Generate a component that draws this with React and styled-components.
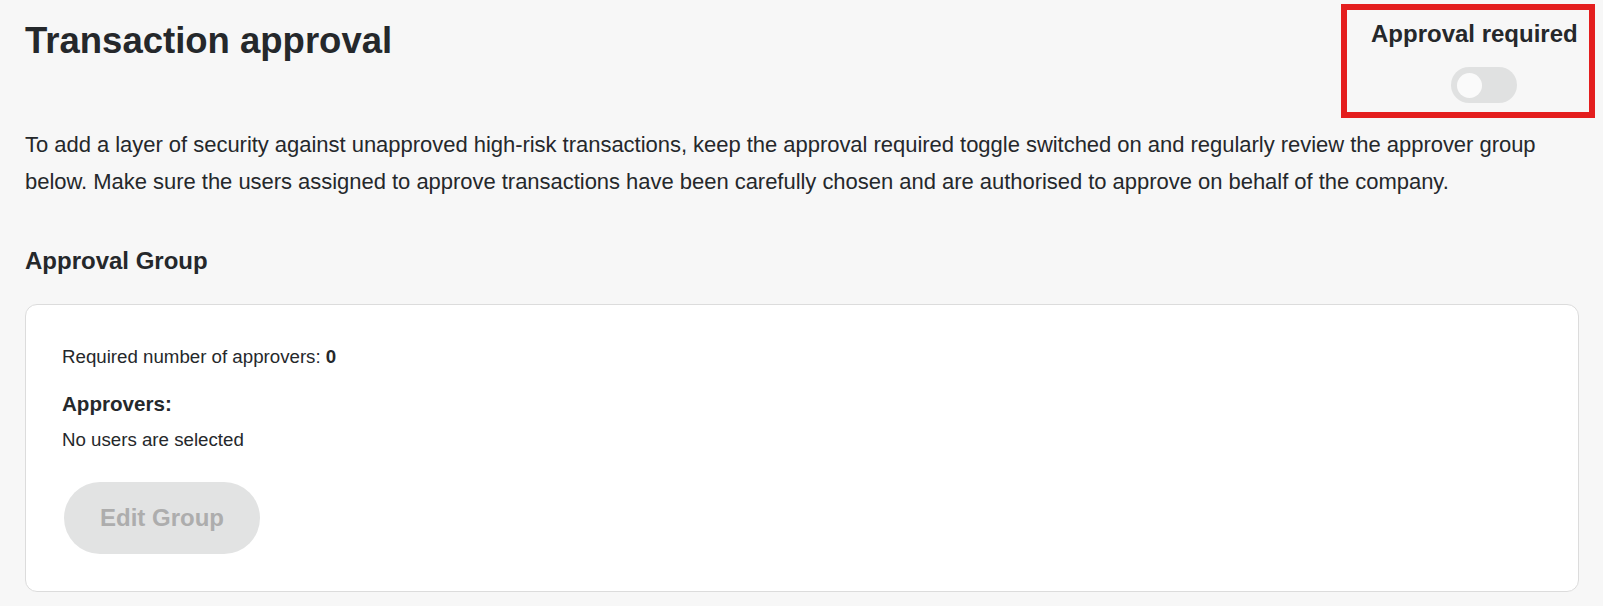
import React from 'react';
import styled, { createGlobalStyle } from 'styled-components';

const GlobalStyle = createGlobalStyle`
  body {
    margin: 0;
    background: #f7f7f7;
    font-family: "Liberation Sans", Arial, sans-serif;
    color: #25282b;
  }
`;

const Page = styled.div`
  padding: 4px 24px 0 25px;
  box-sizing: border-box;
`;

const Header = styled.div`
  display: flex;
  justify-content: space-between;
  align-items: flex-start;
`;

const Title = styled.h1`
  margin: 15px 0 0;
  font-size: 36.5px;
  line-height: 43px;
  font-weight: 700;
`;

const ToggleBox = styled.div`
  display: flex;
  flex-direction: column;
  align-items: flex-start;
  width: 254px;
  height: 114px;
  box-sizing: border-box;
  margin-right: -16px;
  padding: 10px 11px 9px 24px;
  border: 6px solid #e41e1e;
`;

const ToggleLabel = styled.span`
  font-size: 24px;
  line-height: 28px;
  font-weight: 700;
  white-space: nowrap;
`;

const Track = styled.button`
  position: relative;
  margin: 19px 0 0 80px;
  padding: 0;
  width: 66px;
  height: 36px;
  border: none;
  border-radius: 18px;
  background: ${(p) => (p.on ? '#e60000' : '#e0e1e1')};
  cursor: pointer;
`;

const Knob = styled.span`
  position: absolute;
  top: 5.5px;
  left: ${(p) => (p.on ? '35px' : '6px')};
  width: 25px;
  height: 25px;
  border-radius: 50%;
  background: #fafafa;
`;

const Intro = styled.p`
  margin: 8px 0 0;
  font-size: 22px;
  line-height: 37px;
  letter-spacing: -0.03px;
`;

const SectionTitle = styled.h2`
  margin: 46px 0 0;
  font-size: 24px;
  line-height: 30px;
  font-weight: 700;
`;

const Card = styled.div`
  margin-top: 28px;
  background: #fff;
  border: 1px solid #dcdcdc;
  border-radius: 12px;
  padding: 40px 36px 37px;
  display: flex;
  flex-direction: column;
  align-items: flex-start;
`;

const Line = styled.div`
  font-size: 18.7px;
  line-height: 24px;
  margin-top: ${(p) => p.gap || 0}px;

  & b {
    font-weight: 700;
  }
`;

const Label = styled.div`
  margin-top: 22px;
  font-size: 20.6px;
  line-height: 26px;
  font-weight: 700;
`;

const EditButton = styled.button`
  margin: 30px 0 0 2px;
  width: 196px;
  height: 72px;
  border: none;
  border-radius: 36px;
  background: #e2e3e3;
  color: #adadad;
  font-family: "Liberation Sans", Arial, sans-serif;
  font-size: 24px;
  font-weight: 700;
  cursor: not-allowed;
`;

const App = () => {
  const approvalRequired = false;

  return (
    <Page>
      <GlobalStyle />
      <Header>
        <Title>Transaction approval</Title>
        <ToggleBox>
          <ToggleLabel>Approval required</ToggleLabel>
          <Track on={approvalRequired ? 1 : 0} aria-label="Approval required">
            <Knob on={approvalRequired ? 1 : 0} />
          </Track>
        </ToggleBox>
      </Header>
      <Intro>
        To add a layer of security against unapproved high-risk transactions, keep the approval
        required toggle switched on and regularly review the approver group below. Make sure the
        users assigned to approve transactions have been carefully chosen and are authorised to
        approve on behalf of the company.
      </Intro>
      <SectionTitle>Approval Group</SectionTitle>
      <Card>
        <Line>
          Required number of approvers: <b>0</b>
        </Line>
        <Label>Approvers:</Label>
        <Line gap={11}>No users are selected</Line>
        <EditButton disabled>Edit Group</EditButton>
      </Card>
    </Page>
  );
};

export default App;
